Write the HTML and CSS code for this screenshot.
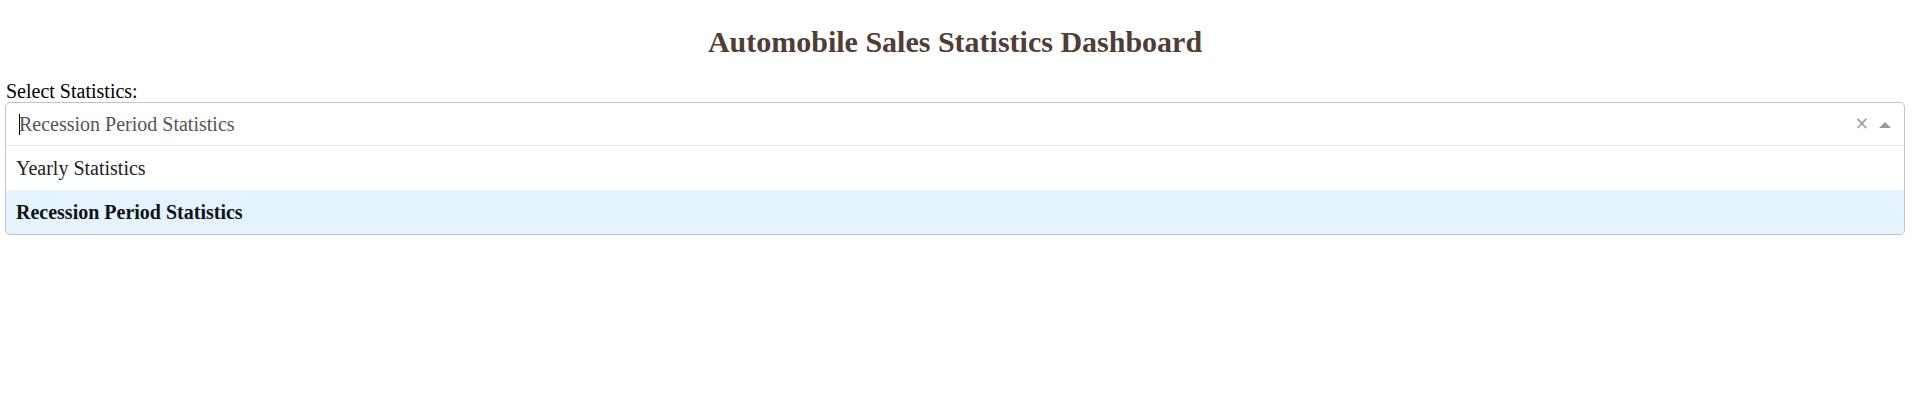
FILE: index.html
```
<!DOCTYPE html>
<html>
<head>
<meta charset="utf-8">
<link rel="stylesheet" href="styles.css">
</head>
<body>
<h1 class="title">Automobile Sales Statistics Dashboard</h1>
<div class="field">
  <label class="label">Select Statistics:</label>
  <div class="select">
    <div class="control">
      <span class="caret"></span>
      <span class="value">Recession Period Statistics</span>
      <span class="clear">×</span>
      <span class="arrow"></span>
    </div>
    <div class="menu">
      <div class="option">Yearly Statistics</div>
      <div class="option focused selected">Recession Period Statistics</div>
    </div>
  </div>
</div>
</body>
</html>
```
FILE: styles.css
```
html, body {
  margin: 0;
  padding: 0;
  background: #fff;
}
body {
  font-family: "Liberation Serif", "Times New Roman", serif;
  padding: 0 8px 0 5px;
}
.title {
  margin: 0;
  padding-top: 25px;
  font-size: 30px;
  line-height: 34px;
  font-weight: bold;
  color: #503D36;
  text-align: center;
}
.field {
  margin-top: 21px;
}
.label {
  display: block;
  font-size: 20px;
  line-height: 22px;
  color: #000;
  padding-left: 1px;
}
.select {
  border: 1px solid #c4c4c4;
  border-radius: 5px;
  box-shadow: 0 1px 0 rgba(0,0,0,0.06);
  overflow: hidden;
  font-size: 20px;
}
.control {
  height: 42px;
  display: flex;
  align-items: center;
  padding: 0 13px 0 13px;
  border-bottom: 1px solid #e6e6e6;
}
.caret {
  width: 1px;
  height: 21px;
  background: #000;
  margin-right: -1px;
}
.value {
  color: #555;
  flex: 1;
}
.clear {
  color: #999;
  font-family: "DejaVu Sans", sans-serif;
  font-size: 17px;
  line-height: 1;
  margin-right: 10px;
  margin-top: -2px;
}
.arrow {
  width: 0;
  height: 0;
  border-left: 6px solid transparent;
  border-right: 6px solid transparent;
  border-bottom: 6px solid #999;
  margin-top: 2px;
}
.menu {
  display: flex;
  flex-direction: column;
}
.option {
  height: 44px;
  display: flex;
  align-items: center;
  padding-left: 10px;
  color: #222;
}
.option.focused {
  background: #e5f2ff;
}
.option.selected {
  font-weight: bold;
  color: #111;
}
```
